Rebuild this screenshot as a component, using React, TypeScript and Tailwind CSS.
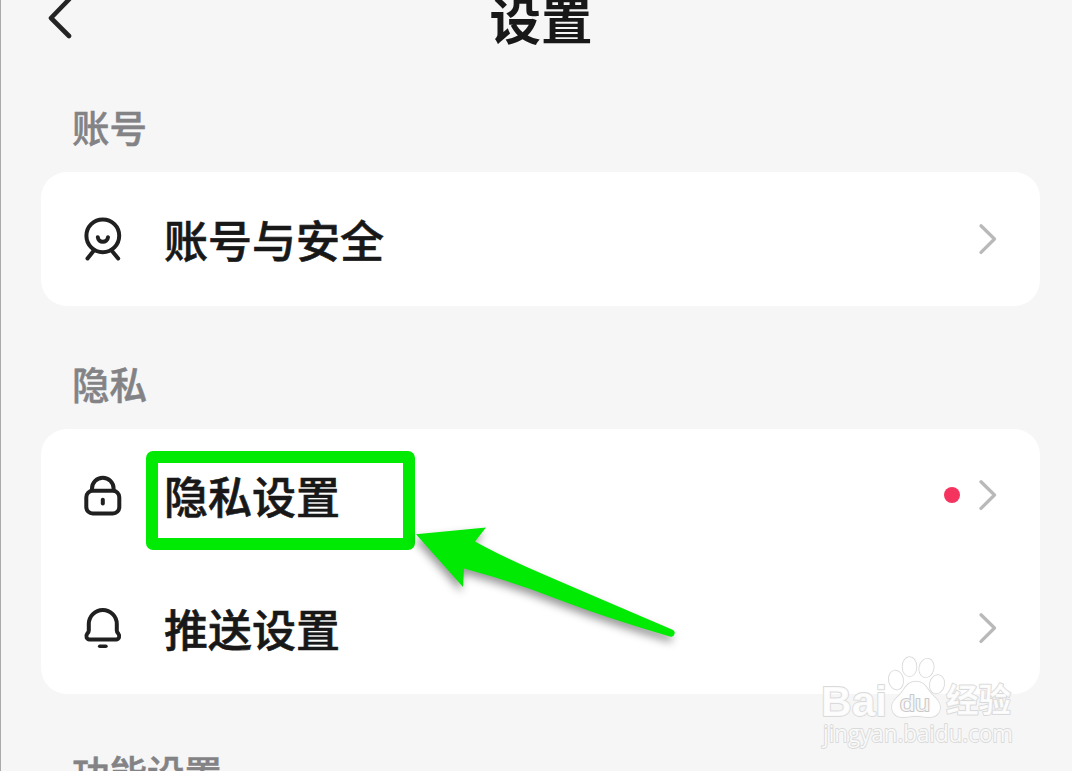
import type { ReactNode } from 'react'

function Chevron() {
  return (
    <svg className="h-8 w-6 shrink-0" viewBox="0 0 24 32" fill="none" stroke="#b9b9b9" strokeWidth="3.3" strokeLinecap="round" strokeLinejoin="round">
      <path d="M5 2.8 18.500 16 5 29.4" />
    </svg>
  )
}

function Icon({ children }: { children: ReactNode }) {
  return (
    <svg className="size-12 shrink-0" viewBox="0 0 48 48" fill="none" stroke="#202020" strokeWidth="4" strokeLinecap="round" strokeLinejoin="round">
      {children}
    </svg>
  )
}

function AccountIcon() {
  return (
    <Icon>
      <circle cx="23.8" cy="20.8" r="16.4" />
      <path d="M18.8 22.2c.5 6 9.5 6 10.2 0" />
      <path d="M14.5 36 8.5 43.5M33 36l6.2 7.500" />
    </Icon>
  )
}

function LockIcon() {
  return (
    <Icon>
      <rect x="7.3" y="19.8" width="33" height="22.8" rx="6.5" />
      <path d="M13 19v-1.5a10.8 10.8 0 0 1 21.6 0V19" />
      <path d="M23.8 28.8v3.8" />
    </Icon>
  )
}

function BellIcon() {
  return (
    <Icon>
      <path d="M9.8 20a14 14 0 0 1 28 0v6.5c0 1.5.8 2.3 1.7 3.4 1.8 2.3.3 5.5-2.2 5.5H10.3c-2.5 0-4-3.2-2.2-5.5.9-1.1 1.7-1.9 1.7-3.4z" />
      <path d="M20.7 42.2h6.2" strokeWidth="3.6" />
    </Icon>
  )
}

function Row({ icon, label, dot }: { icon: ReactNode; label: string; dot?: boolean }) {
  return (
    <div className="flex flex-1 items-center pr-[40px] pl-[38px]">
      {icon}
      <span className="ml-[37px] flex-1 text-[44px] leading-[64px] font-medium text-[#181818] [-webkit-text-stroke:0.6px_#181818]">{label}</span>
      {dot && <span className="mr-[16px] size-4 rounded-full bg-[#f5335f]" />}
      <Chevron />
    </div>
  )
}

function SectionTitle({ children }: { children: ReactNode }) {
  return (
    <h2 className="pl-[31px] text-[37.5px] leading-[54px] font-medium text-[#838386] [-webkit-text-stroke:0.5px_#838386]">
      {children}
    </h2>
  )
}

function Annotation() {
  return (
    <>
      <div className="absolute top-[451px] left-[145px] h-[99px] w-[269px] rounded-[7px] border-[12px] border-[#00ea04]" />
      <svg className="absolute top-[510px] left-[399px] h-[140px] w-[300px] drop-shadow-[-2px_5px_4px_rgba(0,0,0,0.4)]" viewBox="0 0 300 140">
        <path
          fill="#00ea04"
          d="M16 24.3 86 17.6 75 31.5Q103 47 145 65Q196 87 272 119.5A3.6 3.6 0 0 1 270 126.5Q210 109 165 92Q115 72 64 58.5L63 77Z"
        />
      </svg>
    </>
  )
}

function Watermark() {
  return (
    <svg
      className="absolute top-[650px] left-[814px] h-[105px] w-[210px]"
      viewBox="0 0 210 105"
      fill="#fff"
      fillOpacity="0.85"
      stroke="#dadada"
      strokeWidth="1.8"
      paintOrder="stroke"
      strokeLinejoin="round"
    >
      <text x="6" y="65.5" textLength="66" lengthAdjust="spacingAndGlyphs" className="font-['Liberation_Sans',sans-serif] text-[43px] font-bold">
        Bai
      </text>
      <g strokeWidth="1.4" stroke="#d6d6d6">
        <ellipse cx="81" cy="30" rx="7.2" ry="9.6" transform="rotate(-12 81 30)" />
        <ellipse cx="94.5" cy="16.7" rx="7" ry="9.8" />
        <ellipse cx="111.5" cy="18" rx="7.2" ry="9.5" transform="rotate(14 111.5 18)" />
        <ellipse cx="122" cy="34.3" rx="7.2" ry="9.4" transform="rotate(14 122 34.3)" />
        <path d="M101 31.500c-10 0-11.500 9-17.500 14.500-5 4.500-7.500 8-6.500 13 1 6 6 8.500 12 8.200 4-.2 8-1.200 12-1.200s8 1 12 1.200c6 .3 11-2.200 12-8.200 1-5-2-9-7-13.500-6-5.500-7-14-17-14z" />
      </g>
      <text
        x="85"
        y="61"
        textLength="30"
        lengthAdjust="spacingAndGlyphs"
        stroke="#c8c8c8"
        className="font-['Liberation_Sans',sans-serif] text-[22px]"
      >
        du
      </text>
      <text x="131" y="62" textLength="65" className="font-['Noto_Sans_CJK_SC',sans-serif] text-[32.5px] font-bold">
        经验
      </text>
      <text x="8" y="91.5" textLength="190" lengthAdjust="spacingAndGlyphs" className="font-['Open_Sans',sans-serif] text-[23px]">
        jingyan.baidu.com
      </text>
    </svg>
  )
}

export default function App() {
  return (
    <div className="relative h-[771px] w-[1072px] overflow-hidden border-l border-[#a9a9a9] bg-[#f6f6f6] font-['Noto_Sans_CJK_SC',sans-serif]">
      <header className="grid h-9 grid-cols-[1fr_auto_1fr] items-center pr-[32px] pl-[41px]">
        <svg
          className="h-9 w-8 overflow-visible"
          viewBox="0 0 32 36"
          fill="none"
          stroke="#242424"
          strokeWidth="4.6"
          strokeLinecap="round"
          strokeLinejoin="round"
        >
          <path d="M27-.5 9 18l18 18" />
        </svg>
        <h1 className="text-[51.5px] leading-9 font-bold text-[#181818]">设置</h1>
      </header>

      <main className="pr-[32px] pl-[40px]">
        <div className="pt-[63px] pb-[19px]">
          <SectionTitle>账号</SectionTitle>
        </div>
        <section className="flex h-[134px] flex-col rounded-[26px] bg-white">
          <Row icon={<AccountIcon />} label="账号与安全" />
        </section>

        <div className="pt-[50px] pb-[19px]">
          <SectionTitle>隐私</SectionTitle>
        </div>
        <section className="flex h-[265px] flex-col rounded-[26px] bg-white">
          <Row icon={<LockIcon />} label="隐私设置" dot />
          <Row icon={<BellIcon />} label="推送设置" />
        </section>

        <div className="pt-[51px]">
          <SectionTitle>功能设置</SectionTitle>
        </div>
      </main>

      <Annotation />
      <Watermark />
    </div>
  )
}
